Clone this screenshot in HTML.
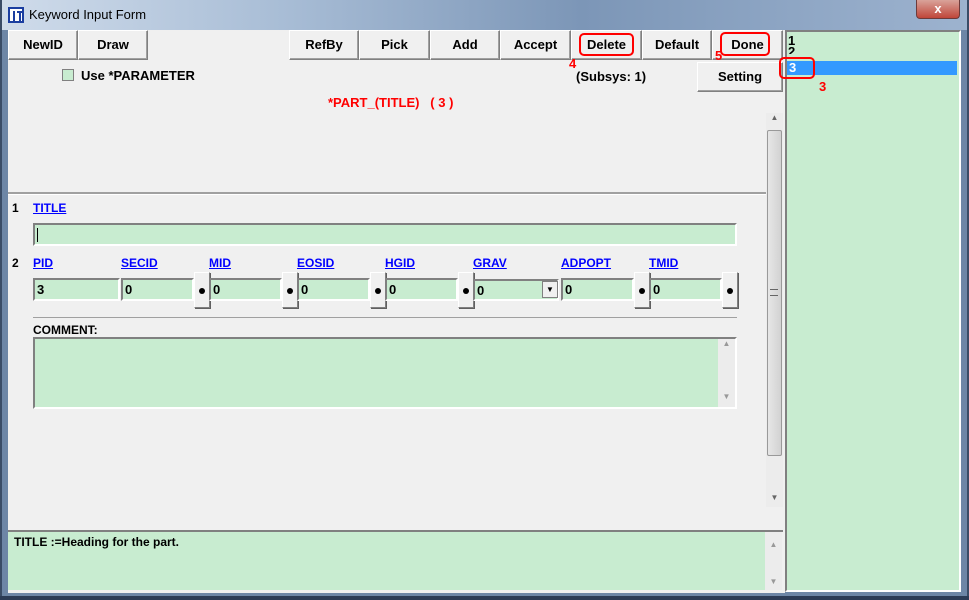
<!DOCTYPE html>
<html><head><style>
*{box-sizing:border-box;margin:0;padding:0}
body{width:969px;height:600px;overflow:hidden;background:#6d86a6;font-family:"Liberation Sans",Tahoma,sans-serif;font-size:12px;position:relative}
.a{position:absolute}
.btn{position:absolute;height:30px;background:#f0f0f0;border:1px solid;border-color:#fff #808080 #808080 #fff;box-shadow:inset -1px -1px 0 #a0a0a0;font-weight:bold;font-size:13px;text-align:center;line-height:28px;color:#000}
.lbl{position:absolute;font-weight:bold;font-size:12px;color:#00f;text-decoration:underline}
.inp{position:absolute;height:23px;background:#c8ecd0;border:2px solid;border-color:#808080 #fff #fff #808080;font-weight:bold;font-size:13px;padding-left:2px;line-height:19px}
.dot{position:absolute;width:16px;height:36px;background:#f0f0f0;border:1px solid;border-color:#fff #808080 #808080 #fff;box-shadow:1px 1px 0 #606060}
.dot:after{content:"";position:absolute;left:4px;top:15px;width:6px;height:6px;border-radius:50%;background:#000}
.red{position:absolute;border:2px solid #f00;border-radius:5px}
.rn{position:absolute;color:#f00;font-size:13px;font-weight:bold}
</style></head><body>
<div class="a" style="left:0;top:0;width:969px;height:30px;background:linear-gradient(90deg,#d0dceb 0%,#a7bcd5 30%,#7c96b7 60%,#9db3cf 100%)"></div>
<div class="a" style="left:0;top:0;width:2px;height:600px;background:#3a4c66"></div>
<div class="a" style="left:967px;top:0;width:2px;height:600px;background:#3a4c66"></div>
<div class="a" style="left:0;top:596px;width:969px;height:4px;background:#2c3c56"></div>
<div class="a" style="left:8px;top:7px;width:16px;height:16px;border:2px solid #1b3ea0;background:#fff"><div class="a" style="left:3px;top:2px;width:2px;height:10px;background:#1b3ea0"></div><div class="a" style="left:7px;top:2px;width:6px;height:2px;background:#1b3ea0"></div><div class="a" style="left:9px;top:2px;width:2px;height:10px;background:#1b3ea0"></div></div>
<div class="a" style="left:29px;top:7px;font-size:13px;color:#000">Keyword Input Form</div>
<div class="a" style="left:916px;top:0;width:44px;height:19px;background:linear-gradient(#d9a39a,#c0463a);border:1px solid #6d3b3b;border-top:none;border-radius:0 0 4px 4px;color:#fff;text-align:center;font-weight:bold;font-size:13px;line-height:17px">x</div>
<div class="a" style="left:8px;top:30px;width:777px;height:563px;background:#f0f0f0"></div>
<div class="btn" style="left:8px;top:30px;width:70px">NewID</div>
<div class="btn" style="left:78px;top:30px;width:70px">Draw</div>
<div class="btn" style="left:289px;top:30px;width:70px">RefBy</div>
<div class="btn" style="left:359px;top:30px;width:71px">Pick</div>
<div class="btn" style="left:430px;top:30px;width:70px">Add</div>
<div class="btn" style="left:500px;top:30px;width:71px">Accept</div>
<div class="btn" style="left:571px;top:30px;width:71px">Delete</div>
<div class="btn" style="left:642px;top:30px;width:70px">Default</div>
<div class="btn" style="left:712px;top:30px;width:71px">Done</div>
<div class="btn" style="left:697px;top:62px;width:86px">Setting</div>
<div class="red" style="left:579px;top:33px;width:55px;height:23px"></div>
<div class="red" style="left:720px;top:32px;width:50px;height:24px"></div>
<div class="rn" style="left:569px;top:56px">4</div>
<div class="rn" style="left:715px;top:48px">5</div>
<div class="a" style="left:62px;top:69px;width:12px;height:12px;background:#c8ecd0;border:1px solid #808080"></div>
<div class="a" style="left:81px;top:68px;font-weight:bold;font-size:13px">Use *PARAMETER</div>
<div class="a" style="left:576px;top:69px;font-weight:bold;font-size:13px">(Subsys: 1)</div>
<div class="a" style="left:328px;top:95px;font-weight:bold;font-size:13px;color:#f00">*PART_(TITLE) &nbsp; ( 3 )</div>
<div class="a" style="left:8px;top:192px;width:758px;height:3px;background:#a0a0a0;border-bottom:1px solid #fff"></div>
<div class="a" style="left:12px;top:201px;font-weight:bold">1</div>
<div class="lbl" style="left:33px;top:201px">TITLE</div>
<div class="inp" style="left:33px;top:223px;width:704px"><span style="display:inline-block;width:1px;height:14px;background:#000;margin-top:3px"></span></div>
<div class="a" style="left:12px;top:256px;font-weight:bold">2</div>
<div class="lbl" style="left:33px;top:256px">PID</div><div class="inp" style="left:33px;top:278px;width:87px">3</div>
<div class="lbl" style="left:121px;top:256px">SECID</div><div class="inp" style="left:121px;top:278px;width:73px">0</div><div class="dot" style="left:194px;top:272px"></div>
<div class="lbl" style="left:209px;top:256px">MID</div><div class="inp" style="left:209px;top:278px;width:73px">0</div><div class="dot" style="left:282px;top:272px"></div>
<div class="lbl" style="left:297px;top:256px">EOSID</div><div class="inp" style="left:297px;top:278px;width:73px">0</div><div class="dot" style="left:370px;top:272px"></div>
<div class="lbl" style="left:385px;top:256px">HGID</div><div class="inp" style="left:385px;top:278px;width:73px">0</div><div class="dot" style="left:458px;top:272px"></div>
<div class="lbl" style="left:473px;top:256px">GRAV</div><div class="inp" style="left:473px;top:279px;width:86px;height:22px">0</div><div class="a" style="left:542px;top:281px;width:16px;height:17px;background:#f0f0f0;border:1px solid #808080;text-align:center;font-size:8px;line-height:15px">▼</div>
<div class="lbl" style="left:561px;top:256px">ADPOPT</div><div class="inp" style="left:561px;top:278px;width:73px">0</div><div class="dot" style="left:634px;top:272px"></div>
<div class="lbl" style="left:649px;top:256px">TMID</div><div class="inp" style="left:649px;top:278px;width:73px">0</div><div class="dot" style="left:722px;top:272px"></div>
<div class="a" style="left:33px;top:317px;width:704px;height:1px;background:#a0a0a0"></div>
<div class="a" style="left:33px;top:323px;font-weight:bold">COMMENT:</div>
<div class="a" style="left:33px;top:337px;width:704px;height:72px;background:#c8ecd0;border:2px solid;border-color:#808080 #fff #fff #808080"></div>
<div class="a" style="left:718px;top:339px;width:17px;height:68px;background:#ececec;font-size:8px;color:#999;text-align:center">▲<div style="margin-top:44px">▼</div></div>
<div class="a" style="left:766px;top:113px;width:17px;height:394px;background:#ececec;font-size:8px;color:#666;text-align:center">▲</div>
<div class="a" style="left:767px;top:130px;width:15px;height:326px;background:linear-gradient(90deg,#e6e6e6,#d2d2d2);border:1px solid #999;border-radius:2px"></div>
<div class="a" style="left:770px;top:289px;width:8px;height:7px;border-top:1px solid #666;border-bottom:1px solid #666"></div>
<div class="a" style="left:766px;top:493px;width:17px;font-size:8px;color:#666;text-align:center">▼</div>
<div class="a" style="left:8px;top:530px;width:775px;height:2px;background:#808080"></div>
<div class="a" style="left:8px;top:532px;width:757px;height:58px;background:#c8ecd0"></div>
<div class="a" style="left:14px;top:535px;font-weight:bold;font-size:12px">TITLE :=Heading for the part.</div>
<div class="a" style="left:765px;top:532px;width:17px;height:58px;background:#ececec;font-size:8px;color:#999;text-align:center;padding-top:8px">▲<div style="margin-top:28px">▼</div></div>
<div class="a" style="left:785px;top:30px;width:176px;height:562px;background:#c8ecd0;border:2px solid;border-color:#808080 #fff #fff #808080"></div>
<div class="a" style="left:788px;top:33px;font-weight:bold;font-size:13px">1</div>
<div class="a" style="left:788px;top:44px;height:10px;overflow:hidden;font-weight:bold;font-size:13px">2</div>
<div class="a" style="left:787px;top:61px;width:170px;height:14px;background:#3399ff;color:#fff;font-weight:bold;font-size:13px;line-height:14px;padding-left:2px">3</div>
<div class="red" style="left:779px;top:57px;width:36px;height:22px"></div>
<div class="rn" style="left:819px;top:79px">3</div>
</body></html>
